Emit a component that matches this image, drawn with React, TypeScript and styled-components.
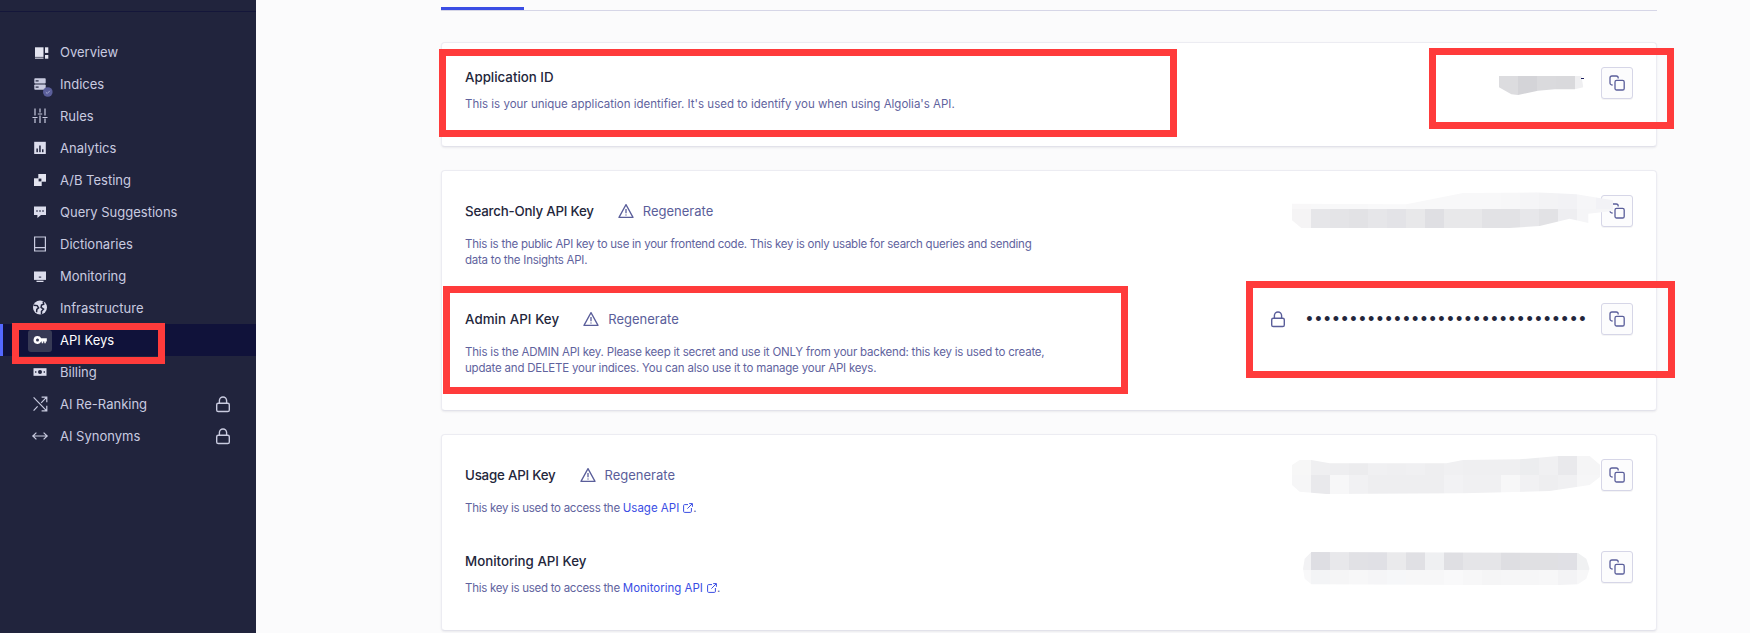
import React from "react";
import styled, { createGlobalStyle } from "styled-components";

const Global = createGlobalStyle`
  html, body { margin: 0; padding: 0; background: #fafafb; }
  body { font-family: Inter, "Liberation Sans", sans-serif; }
`;

const Page = styled.div`
  position: relative;
  display: flex;
  width: 1750px;
  height: 633px;
  overflow: hidden;
  background: #fbfbfc;
`;

const Sidebar = styled.aside`
  width: 256px;
  flex: none;
  background: #21243d;
  display: flex;
  flex-direction: column;
`;

const SidebarHeader = styled.div`
  height: 11px;
  border-bottom: 1px solid #14163a;
  margin-bottom: 24px;
`;

const Nav = styled.nav`
  display: flex;
  flex-direction: column;
`;

const NavItem = styled.a<{ $active?: boolean }>`
  position: relative;
  display: flex;
  align-items: center;
  height: 32px;
  padding: 0 25px 0 30px;
  gap: 10px;
  font-size: 13px;
  color: ${(p) => (p.$active ? "#ffffff" : "#c9cbe0")};
  background: ${(p) => (p.$active ? "#10123a" : "transparent")};
  ${(p) => (p.$active ? "box-shadow: inset 3px 0 0 #5468ff;" : "")}
`;

const NavIconBox = styled.span<{ $active?: boolean }>`
  width: 20px;
  height: 20px;
  flex: none;
  display: block;
  position: relative;
  &::before {
    content: "";
    display: ${(p) => (p.$active ? "block" : "none")};
    position: absolute;
    left: -2px;
    right: -2px;
    top: 0;
    bottom: -2px;
    border-radius: 3px;
    background: #373a55;
  }
  svg {
    position: absolute;
    left: 0;
    top: 0;
    overflow: visible;
  }
`;

const NavLabel = styled.span`
  flex: 1;
`;

const Main = styled.main`
  flex: 1;
  padding: 7px 93px 0 185px;
  min-width: 0;
`;

const Tabs = styled.div`
  height: 3px;
  border-bottom: 1px solid #d6d6e7;
  margin-bottom: 31px;
`;

const ActiveTab = styled.div`
  width: 83px;
  height: 3px;
  background: #3a4de4;
`;

const Card = styled.section`
  background: #ffffff;
  border: 1px solid #ececf2;
  border-bottom-color: #e2e2ea;
  border-radius: 4px;
  padding: 24px 23px 34px;
  margin-bottom: 23px;
  box-shadow: 0 1px 2px rgba(35, 38, 59, 0.08);
`;

const Row = styled.div`
  display: flex;
  justify-content: space-between;
  align-items: flex-start;
  & + & {
    margin-top: 35px;
  }
`;

const RowText = styled.div`
  width: 620px;
`;

const TitleLine = styled.div<{ $tall?: boolean }>`
  display: flex;
  align-items: center;
  height: ${(p) => (p.$tall ? "32px" : "20px")};
  gap: 24px;
`;

const Title = styled.h3<{ $ls?: number }>`
  margin: 0;
  font-size: 13.3px;
  font-weight: 500;
  color: #23263b;
  letter-spacing: ${(p) => p.$ls ?? 0}px;
`;

const Regenerate = styled.a`
  display: flex;
  align-items: center;
  gap: 9px;
  font-size: 13px;
  color: #5a5e9a;
`;

const Description = styled.p<{ $ls?: number }>`
  margin: 9px 0 0;
  font-size: 11.5px;
  line-height: 16px;
  color: #5f639e;
  letter-spacing: ${(p) => p.$ls ?? 0}px;
`;

const DocLink = styled.a`
  color: #3a4de4;
  letter-spacing: 0;
  svg {
    margin-left: 4px;
    vertical-align: -1px;
  }
`;

const KeyArea = styled.div`
  display: flex;
  align-items: center;
  gap: 16px;
  height: 32px;
`;

const Secret = styled.span`
  font-size: 18px;
  line-height: 1;
  color: #23263b;
  letter-spacing: 2.5px;
  margin-left: 4px;
  margin-right: -3px;
  font-family: "Liberation Sans", sans-serif;
`;

const LockBox = styled.span`
  display: flex;
  color: #5a5e9a;
`;

const NavLock = styled.span`
  display: flex;
  color: #c9cbe0;
`;

const CopyButton = styled.button`
  width: 32px;
  height: 32px;
  flex: none;
  padding: 0;
  display: flex;
  align-items: center;
  justify-content: center;
  background: #fcfcfd;
  border: 1px solid #d6d6e7;
  border-radius: 3px;
  box-shadow: 0 1px 0 rgba(35, 38, 59, 0.05);
  color: #5a5e9a;
`;

const SmudgeSvg = styled.svg<{ $mt: number; $mr: number }>`
  display: block;
  flex: none;
  position: relative;
  z-index: 1;
  margin-top: ${(p) => p.$mt}px;
  margin-right: ${(p) => p.$mr}px;
`;

const Marker = styled.div<{ $x: number; $y: number; $w: number; $h: number }>`
  position: absolute;
  left: ${(p) => p.$x}px;
  top: ${(p) => p.$y}px;
  width: ${(p) => p.$w}px;
  height: ${(p) => p.$h}px;
  box-sizing: border-box;
  border: 7px solid #ff3b3b;
  pointer-events: none;
  z-index: 5;
`;

/* ---------- icons ---------- */
const BG = "#21243d";
const FG = "#c9cbe0";

const Ico: React.FC<{ children: React.ReactNode }> = ({ children }) => (
  <svg width="20" height="20" viewBox="0 0 20 20" fill="none">
    {children}
  </svg>
);

const icons: Record<string, React.ReactNode> = {
  overview: (
    <Ico>
      <rect x="5" y="5.3" width="8.5" height="9.6" fill="#e3e4f0" />
      <rect x="5" y="15.6" width="8.5" height="1.1" fill="#e3e4f0" />
      <rect x="15" y="5.3" width="3.3" height="5.6" fill="#e3e4f0" />
      <rect x="15" y="13" width="3.3" height="3.7" fill="#e3e4f0" />
    </Ico>
  ),
  indices: (
    <Ico>
      <rect x="4.3" y="4.3" width="11.4" height="5.2" rx="0.8" fill={FG} />
      <rect x="4.3" y="10.4" width="11.4" height="5.4" rx="0.8" fill={FG} />
      <rect x="5.6" y="6.3" width="3" height="1.2" fill={BG} />
      <rect x="5.6" y="12.5" width="3" height="1.2" fill={BG} />
      <circle cx="17.8" cy="18" r="4.8" fill="#5a5e9a" />
      <path d="M15.8 18.2l1.4 1.3 2.6-2.7" stroke="#a5a8cf" strokeWidth="1" />
    </Ico>
  ),
  rules: (
    <Ico>
      <g stroke={FG} strokeWidth="1.2">
        <path d="M5 2.5V9.5M5 12.5V17M2.5 11.5H7.5" />
        <path d="M10 2.5V6.5M10 9.5V17M7.8 8H12.2" />
        <path d="M15 2.5V9.5M15 12.5V17M12.5 11.5H17.5" />
      </g>
    </Ico>
  ),
  analytics: (
    <Ico>
      <rect x="4.2" y="3.8" width="11.6" height="12.2" fill="#dcdded" />
      <rect x="6.4" y="10.5" width="1.5" height="3.7" fill={BG} />
      <rect x="9.2" y="7.5" width="1.5" height="6.7" fill={BG} />
      <rect x="12" y="11.3" width="1.5" height="2.9" fill={BG} />
    </Ico>
  ),
  ab: (
    <Ico>
      <rect x="8.3" y="4" width="7.7" height="7.7" fill="#e3e4f0" />
      <rect x="4" y="8.3" width="7.7" height="7.7" fill="#e3e4f0" />
      <rect x="8.6" y="8.6" width="2.8" height="2.8" fill={BG} />
    </Ico>
  ),
  query: (
    <Ico>
      <path d="M4 4.5h12v8.6H11l-3.6 3v-3H4z" fill="#dcdded" />
      <rect x="6.3" y="8.3" width="1.4" height="1.4" fill={BG} />
      <rect x="9.3" y="8.3" width="1.4" height="1.4" fill={BG} />
      <rect x="12.3" y="8.3" width="1.4" height="1.4" fill={BG} />
    </Ico>
  ),
  dictionaries: (
    <Ico>
      <path d="M4.6 3h10.8v14H4.6zM4.6 13.6h10.8" stroke={FG} strokeWidth="1.2" />
    </Ico>
  ),
  monitoring: (
    <Ico>
      <rect x="4" y="5.5" width="12" height="8.4" fill="#dcdded" />
      <rect x="8.8" y="10.6" width="2.4" height="1" fill={BG} />
      <rect x="6.5" y="14.7" width="7" height="1.3" fill="#dcdded" />
    </Ico>
  ),
  infrastructure: (
    <Ico>
      <circle cx="10" cy="9.5" r="7" fill="#dcdded" />
      <path
        d="M3.6 7.2l3.6 0.4 1.4 2.2-1.8 1.6-0.2 2.8M11.5 16.2v-3l2-2-2.4-1.8 0.4-2.4 2.2-0.8-0.6-2.7"
        stroke={BG}
        strokeWidth="1.5"
      />
    </Ico>
  ),
  keys: (
    <Ico>
      <path
        d="M7.6 6a4 4 0 0 1 3.6 2.3h5.6v3.3H15.8v1.6h-1.5v-1.6h-1.1v1.6h-1.5v-1.6h-.5A4 4 0 1 1 7.6 6z"
        fill="#ffffff"
      />
      <circle cx="7.5" cy="10" r="1.5" fill="#373a55" />
    </Ico>
  ),
  billing: (
    <Ico>
      <rect x="3.5" y="6.2" width="13" height="7.6" fill="#dcdded" />
      <circle cx="10" cy="10" r="2" fill={BG} />
      <rect x="5" y="9.3" width="1.4" height="1.4" fill={BG} />
      <rect x="13.6" y="9.3" width="1.4" height="1.4" fill={BG} />
    </Ico>
  ),
  rerank: (
    <Ico>
      <path
        d="M3.6 3.4L16.4 16.6M3.6 16.6L7.6 12.4M11.2 8.8L16.4 3.4M11.6 3.2H16.8V8.2M11.6 16.8H16.8V11.8"
        stroke={FG}
        strokeWidth="1.2"
      />
    </Ico>
  ),
  synonyms: (
    <Ico>
      <path d="M2.8 10H17.2M6.4 6.6L2.8 10L6.4 13.4M13.6 6.6L17.2 10L13.6 13.4" stroke={FG} strokeWidth="1.2" />
    </Ico>
  ),
};

const LockIcon = () => (
  <svg width="16" height="17" viewBox="0 0 16 17" fill="none" stroke="currentColor" strokeWidth="1.4">
    <rect x="1.7" y="7.2" width="12.6" height="8.3" rx="1.6" />
    <path d="M4.4 7.2V4.6a3.6 3.6 0 0 1 7.2 0v2.6" />
  </svg>
);

const CopyIcon = () => (
  <svg width="16" height="16" viewBox="0 0 16 16" fill="none" stroke="currentColor" strokeWidth="1.3">
    <rect x="6" y="5.4" width="9.2" height="9.6" rx="1.6" />
    <path d="M3.6 10H3a2 2 0 0 1-2-2V3a2 2 0 0 1 2-2h4.2a2 2 0 0 1 2 2v.4" />
  </svg>
);

const WarnIcon = () => (
  <svg width="16" height="16" viewBox="0 0 16 16" fill="none" stroke="currentColor" strokeWidth="1.3">
    <path d="M8 1.6L15 14.4H1z" strokeLinejoin="round" />
    <path d="M8 6v4.2M8 11.4v1.2" />
  </svg>
);

const ExtIcon = () => (
  <svg width="10" height="10" viewBox="0 0 10 10" fill="none" stroke="currentColor" strokeWidth="1">
    <path d="M5 1.6H1.6a1 1 0 0 0-1 1v5.8a1 1 0 0 0 1 1h5.8a1 1 0 0 0 1-1V5M4.4 5.6L9.2.8M6.2.6h3.2v3.2" />
  </svg>
);

/* ---------- pixelated smudges (drawn in 3x coordinates) ---------- */
type Band = { y: number; h: number; colors: string[] };

const Smudge: React.FC<{
  id: string;
  box: [number, number, number, number];
  start: number;
  points: string;
  bands: Band[];
  mt?: number;
  mr?: number;
  children?: React.ReactNode;
}> = ({ id, box, start, points, bands, mt = 0, mr = 0, children }) => (
  <SmudgeSvg
    $mt={mt}
    $mr={mr}
    width={box[2] / 3}
    height={box[3] / 3}
    viewBox={box.join(" ")}
    shapeRendering="crispEdges"
  >
    <defs>
      <clipPath id={id}>
        <polygon points={points} />
      </clipPath>
    </defs>
    <g clipPath={`url(#${id})`}>
      {bands.map((b) =>
        b.colors.map((c, i) => (
          <rect key={`${b.y}-${i}`} x={start + i * 57} y={b.y} width="57.5" height={b.h} fill={c} />
        )),
      )}
    </g>
    {children}
  </SmudgeSvg>
);

const navItems: { key: string; label: string; locked?: boolean; active?: boolean }[] = [
  { key: "overview", label: "Overview" },
  { key: "indices", label: "Indices" },
  { key: "rules", label: "Rules" },
  { key: "analytics", label: "Analytics" },
  { key: "ab", label: "A/B Testing" },
  { key: "query", label: "Query Suggestions" },
  { key: "dictionaries", label: "Dictionaries" },
  { key: "monitoring", label: "Monitoring" },
  { key: "infrastructure", label: "Infrastructure" },
  { key: "keys", label: "API Keys", active: true },
  { key: "billing", label: "Billing" },
  { key: "rerank", label: "AI Re-Ranking", locked: true },
  { key: "synonyms", label: "AI Synonyms", locked: true },
];

export default function App() {
  return (
    <Page>
      <Global />
      <Sidebar>
        <SidebarHeader />
        <Nav>
          {navItems.map((n) => (
            <NavItem key={n.key} $active={n.active}>
              <NavIconBox $active={n.active}>{icons[n.key]}</NavIconBox>
              <NavLabel>{n.label}</NavLabel>
              {n.locked && (
                <NavLock>
                  <LockIcon />
                </NavLock>
              )}
            </NavItem>
          ))}
        </Nav>
      </Sidebar>
      <Main>
        <Tabs>
          <ActiveTab />
        </Tabs>

        <Card>
          <Row>
            <RowText>
              <TitleLine>
                <Title>Application ID</Title>
              </TitleLine>
              <Description>
                This is your unique application identifier. It's used to identify you when using Algolia's API.
              </Description>
            </RowText>
            <KeyArea>
              <Smudge
                id="s-app"
                box={[753, 228, 258, 57]}
                start={753}
                mt={4}
                points="753,228 1000,228 1006,262 980,268 920,268 870,272 810,285 790,283 753,262"
                bands={[{ y: 228, h: 57, colors: ["#dcdcdf", "#d4d4d8", "#dadadd", "#d9d9dc", "#efeff1"] }]}
              >
                <rect x="999" y="234" width="9" height="3" fill="#1a1d5c" />
              </Smudge>
              <CopyButton>
                <CopyIcon />
              </CopyButton>
            </KeyArea>
          </Row>
        </Card>

        <Card>
          <Row>
            <RowText>
              <TitleLine $tall>
                <Title $ls={-0.2}>Search-Only API Key</Title>
                <Regenerate>
                  <WarnIcon />
                  Regenerate
                </Regenerate>
              </TitleLine>
              <Description $ls={-0.25}>
                This is the public API key to use in your frontend code. This key is only usable for search queries and
                sending
                <br />
                data to the Insights API.
              </Description>
            </RowText>
            <KeyArea>
              <Smudge
                id="s-search"
                box={[127, 575, 963, 108]}
                start={127}
                mt={-2}
                mr={-28}
                points="127,610 470,612 640,578 860,576 980,582 1090,600 1090,632 1016,640 1016,668 960,655 870,677 780,683 155,683 127,660"
                bands={[
                  {
                    y: 575,
                    h: 52,
                    colors: ["#f8f7f8", "#f8f8f9", "#f8f8f9", "#f8f8f9", "#f9f9fa", "#f9f9fa", "#f8f8f9", "#f8f8f9", "#f8f8f9", "#f8f8f9", "#f8f8f9", "#f7f7f8", "#f5f5f7", "#f3f3f5", "#f2f2f5", "#f6f6f8", "#f2f2f6"],
                  },
                  {
                    y: 627,
                    h: 56,
                    colors: ["#f5f4f5", "#e6e6e9", "#e4e4e7", "#e2e2e5", "#e6e6e9", "#e3e3e7", "#e8e8ea", "#dfdfe3", "#e8e8ea", "#e8e8ea", "#e2e2e5", "#e2e2e5", "#e7e7ea", "#e2e2e5", "#eeeef1", "#f5f5f7", "#f5f5f7"],
                  },
                ]}
              />
              <CopyButton>
                <CopyIcon />
              </CopyButton>
            </KeyArea>
          </Row>
          <Row>
            <RowText>
              <TitleLine $tall>
                <Title $ls={0.08}>Admin API Key</Title>
                <Regenerate>
                  <WarnIcon />
                  Regenerate
                </Regenerate>
              </TitleLine>
              <Description $ls={-0.2}>
                This is the ADMIN API key. Please keep it secret and use it ONLY from your backend: this key is used to
                create,
                <br />
                update and DELETE your indices. You can also use it to manage your API keys.
              </Description>
            </RowText>
            <KeyArea>
              <LockBox>
                <LockIcon />
              </LockBox>
              <Secret>••••••••••••••••••••••••••••••••</Secret>
              <CopyButton>
                <CopyIcon />
              </CopyButton>
            </KeyArea>
          </Row>
        </Card>

        <Card>
          <Row>
            <RowText>
              <TitleLine $tall>
                <Title $ls={-0.2}>Usage API Key</Title>
                <Regenerate>
                  <WarnIcon />
                  Regenerate
                </Regenerate>
              </TitleLine>
              <Description $ls={-0.28}>
                This key is used to access the{" "}
                <DocLink>
                  Usage API
                  <ExtIcon />
                </DocLink>
                .
              </Description>
            </RowText>
            <KeyArea>
              <Smudge
                id="s-usage"
                box={[127, 78, 926, 112]}
                start={126}
                mr={-16}
                points="150,90 185,90 240,100 590,100 640,90 810,88 925,78 1020,78 1052,105 1052,140 1020,165 900,183 640,190 230,192 150,185 127,165 127,105"
                bands={[
                  {
                    y: 78,
                    h: 56,
                    colors: ["#f7f7f7", "#efeff1", "#eeeef0", "#ececee", "#f0f0f2", "#efeff1", "#f0f0f2", "#eeeef0", "#f0f0f2", "#efeff1", "#efeff1", "#efeff1", "#ecedef", "#f0f0f2", "#e9e9ec", "#f5f5f6", "#f5f5f6"],
                  },
                  {
                    y: 134,
                    h: 58,
                    colors: ["#f6f6f7", "#e9e9ec", "#f7f7f8", "#f1f1f3", "#eeeef0", "#eeeef0", "#eeeef0", "#eeeef0", "#f2f2f4", "#f0f0f2", "#f0f0f2", "#f7f7f8", "#f1f1f3", "#eeeef0", "#f0f0f2", "#f6f6f7", "#f6f6f7"],
                  },
                ]}
              />
              <CopyButton>
                <CopyIcon />
              </CopyButton>
            </KeyArea>
          </Row>
          <Row>
            <RowText>
              <TitleLine>
                <Title>Monitoring API Key</Title>
              </TitleLine>
              <Description $ls={-0.28}>
                This key is used to access the{" "}
                <DocLink>
                  Monitoring API
                  <ExtIcon />
                </DocLink>
                .
              </Description>
            </RowText>
            <KeyArea>
              <Smudge
                id="s-monitor"
                box={[160, 365, 860, 100]}
                start={126}
                mt={3}
                mr={-5}
                points="185,365 985,368 1010,385 1020,415 1010,445 985,462 900,465 185,462 165,445 160,415 165,385"
                bands={[
                  {
                    y: 365,
                    h: 55,
                    colors: ["#f2f2f4", "#dedee3", "#e8e8eb", "#e1e1e5", "#e0e0e5", "#eaeaec", "#e0e0e4", "#eff0f2", "#dfdfe3", "#e5e5e8", "#e5e5e8", "#dedee2", "#e0e0e3", "#e0e0e3", "#e0e0e5", "#f0f1f2"],
                  },
                  {
                    y: 420,
                    h: 45,
                    colors: ["#f8f8f9", "#f3f4f6", "#f5f5f6", "#f7f7f8", "#f5f5f7", "#f6f7f9", "#f7f7f8", "#f7f7f8", "#f9f9fa", "#f7f7f8", "#f5f5f6", "#f6f6f7", "#f6f6f7", "#f7f7f8", "#f3f3f5", "#f7f7f8"],
                  },
                ]}
              />
              <CopyButton>
                <CopyIcon />
              </CopyButton>
            </KeyArea>
          </Row>
        </Card>
      </Main>

      <Marker $x={12} $y={323} $w={153} $h={41} />
      <Marker $x={439} $y={49} $w={738} $h={88} />
      <Marker $x={1429} $y={48} $w={245} $h={81} />
      <Marker $x={443} $y={286} $w={685} $h={108} />
      <Marker $x={1246} $y={281} $w={429} $h={97} />
    </Page>
  );
}
